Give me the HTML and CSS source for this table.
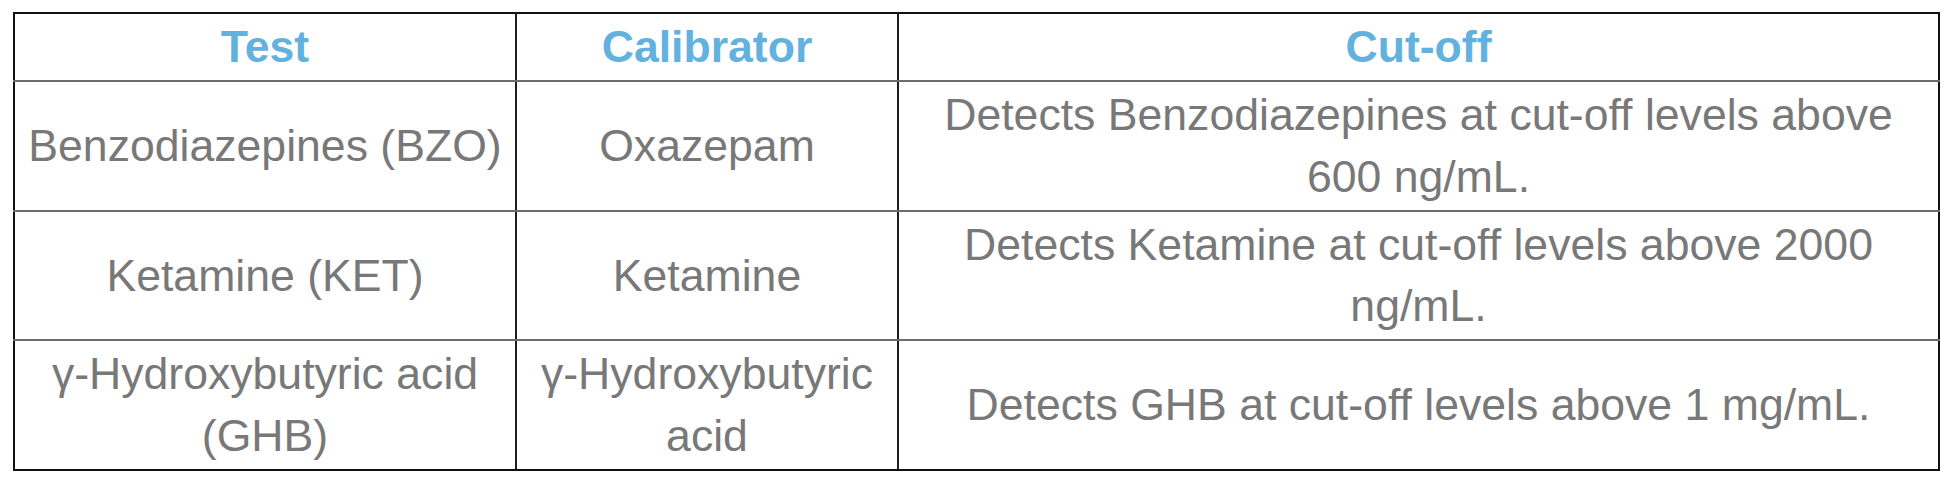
FILE: index.html
```html
<!DOCTYPE html>
<html lang="en">
<head>
<meta charset="utf-8">
<title>Drug test cut-offs</title>
<link rel="stylesheet" href="styles.css">
</head>
<body>
<table class="cutoffs">
  <colgroup>
    <col class="col-test">
    <col class="col-cal">
    <col class="col-cut">
  </colgroup>
  <thead>
    <tr>
      <th>Test</th>
      <th>Calibrator</th>
      <th>Cut-off</th>
    </tr>
  </thead>
  <tbody>
    <tr>
      <td>Benzodiazepines (BZO)</td>
      <td>Oxazepam</td>
      <td>Detects Benzodiazepines at cut-off levels above 600 ng/mL.</td>
    </tr>
    <tr>
      <td>Ketamine (KET)</td>
      <td>Ketamine</td>
      <td>Detects Ketamine at cut-off levels above 2000 ng/mL.</td>
    </tr>
    <tr>
      <td>γ-Hydroxybutyric acid (GHB)</td>
      <td>γ-Hydroxybutyric acid</td>
      <td>Detects GHB at cut-off levels above 1 mg/mL.</td>
    </tr>
  </tbody>
</table>
</body>
</html>
```

FILE: styles.css
```css
html, body {
  margin: 0;
  padding: 0;
  background: #ffffff;
}

body {
  padding: 12px 0 0 13px;
}

.cutoffs {
  width: 1925px;
  table-layout: fixed;
  border-collapse: collapse;
  font-family: "Liberation Sans", Arial, Helvetica, sans-serif;
  font-size: 44.6px;
  line-height: 61.6px;
  color: #787878;
}

.col-test { width: 502px; }
.col-cal { width: 382px; }
.col-cut { width: 1041px; }

.cutoffs th,
.cutoffs td {
  padding: 2.2px 4px;
  text-align: center;
  vertical-align: middle;
  border-top: 2px solid #6c6c6c;
  border-bottom: 2px solid #6c6c6c;
  border-left: 2px solid #1e1e1e;
  border-right: 2px solid #1e1e1e;
}

.cutoffs th {
  font-weight: bold;
  color: #63b1df;
  border-top-color: #111111;
}

.cutoffs th:first-child,
.cutoffs td:first-child {
  border-left-color: #111111;
}

.cutoffs th:last-child,
.cutoffs td:last-child {
  border-right-color: #111111;
}

.cutoffs tbody tr:last-child td {
  border-bottom-color: #111111;
}
```
